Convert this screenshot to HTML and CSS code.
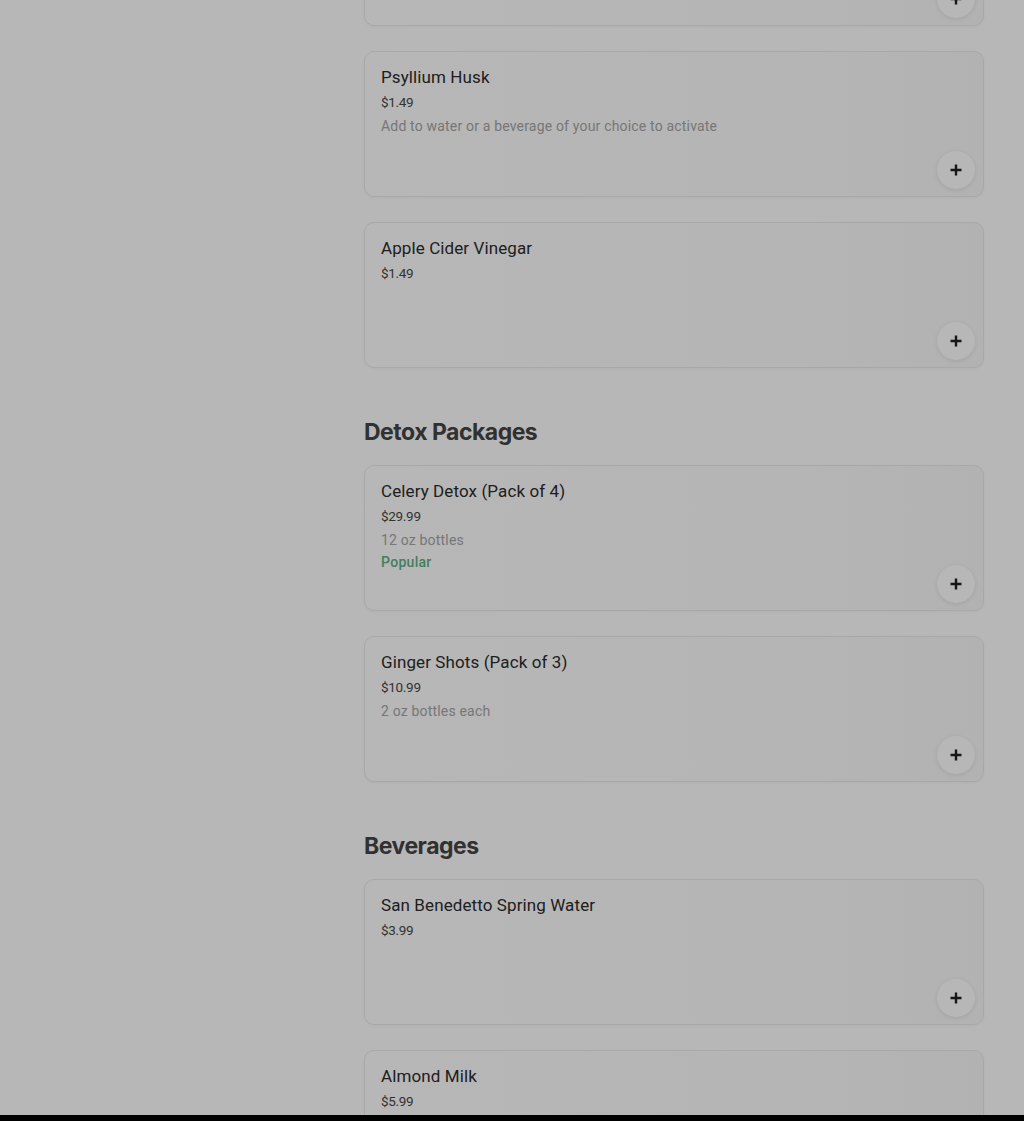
FILE: index.html
```html
<!DOCTYPE html>
<html>
<head>
<meta charset="utf-8">
<link rel="stylesheet" href="styles.css">
</head>
<body>
<div class="layout">
  <main class="menu">
    <div class="card card-partial">
      <button class="add" aria-label="Add"><svg viewBox="0 0 12 12" width="12" height="12"><path d="M6 0.5v11M0.5 6h11" stroke="#1f1f1f" stroke-width="2.4" fill="none"/></svg></button>
    </div>
    <div class="card">
      <div class="name">Psyllium Husk</div>
      <div class="price">$1.49</div>
      <div class="desc">Add to water or a beverage of your choice to activate</div>
      <button class="add" aria-label="Add"><svg viewBox="0 0 12 12" width="12" height="12"><path d="M6 0.5v11M0.5 6h11" stroke="#1f1f1f" stroke-width="2.4" fill="none"/></svg></button>
    </div>
    <div class="card">
      <div class="name">Apple Cider Vinegar</div>
      <div class="price">$1.49</div>
      <button class="add" aria-label="Add"><svg viewBox="0 0 12 12" width="12" height="12"><path d="M6 0.5v11M0.5 6h11" stroke="#1f1f1f" stroke-width="2.4" fill="none"/></svg></button>
    </div>

    <h2 class="section">Detox Packages</h2>
    <div class="card">
      <div class="name">Celery Detox (Pack of 4)</div>
      <div class="price">$29.99</div>
      <div class="desc">12 oz bottles</div>
      <div class="tag">Popular</div>
      <button class="add" aria-label="Add"><svg viewBox="0 0 12 12" width="12" height="12"><path d="M6 0.5v11M0.5 6h11" stroke="#1f1f1f" stroke-width="2.4" fill="none"/></svg></button>
    </div>
    <div class="card">
      <div class="name">Ginger Shots (Pack of 3)</div>
      <div class="price">$10.99</div>
      <div class="desc">2 oz bottles each</div>
      <button class="add" aria-label="Add"><svg viewBox="0 0 12 12" width="12" height="12"><path d="M6 0.5v11M0.5 6h11" stroke="#1f1f1f" stroke-width="2.4" fill="none"/></svg></button>
    </div>

    <h2 class="section">Beverages</h2>
    <div class="card">
      <div class="name">San Benedetto Spring Water</div>
      <div class="price">$3.99</div>
      <button class="add" aria-label="Add"><svg viewBox="0 0 12 12" width="12" height="12"><path d="M6 0.5v11M0.5 6h11" stroke="#1f1f1f" stroke-width="2.4" fill="none"/></svg></button>
    </div>
    <div class="card">
      <div class="name">Almond Milk</div>
      <div class="price">$5.99</div>
    </div>
  </main>
</div>
<div class="overlay"></div>
<div class="bottom-bar"></div>
</body>
</html>
```
FILE: styles.css
```css
html, body {
  margin: 0;
  padding: 0;
  background: #ffffff;
  height: 1121px;
  overflow: hidden;
}
body {
  font-family: Roboto, "Noto Sans", Arial, sans-serif;
  color: #3f3f3f;
}
.layout {
  display: flex;
  padding-left: 364px;
  padding-right: 40px;
}
.menu {
  flex: 1;
  display: flex;
  flex-direction: column;
  gap: 25px;
  margin-top: -120px;
}
.card {
  position: relative;
  box-sizing: border-box;
  height: 146px;
  flex-shrink: 0;
  border: 1px solid #ebebeb;
  border-radius: 10px;
  padding: 15px 16px;
  background: linear-gradient(90deg, #ffffff 0%, #fdfdfd 60%, #f9f9f9 100%);
  box-shadow: 0 1px 3px rgba(0,0,0,0.04);
}
.name {
  font-size: 17px;
  line-height: 20px;
  font-weight: 400;
  color: #2c2c2c;
  letter-spacing: 0.1px;
}
.price {
  margin-top: 5px;
  font-size: 13.5px;
  line-height: 20px;
  color: #484848;
  letter-spacing: -0.3px;
}
.desc {
  margin-top: 4px;
  font-size: 14px;
  line-height: 20px;
  color: #a6a6a6;
  letter-spacing: 0.18px;
}
.tag {
  margin-top: 2px;
  font-size: 14px;
  line-height: 20px;
  font-weight: 500;
  color: #5faf88;
  letter-spacing: 0.3px;
}
.add {
  position: absolute;
  right: 8px;
  bottom: 7px;
  width: 38px;
  height: 38px;
  border-radius: 50%;
  border: none;
  background: #ffffff;
  box-shadow: 0 1px 5px rgba(0,0,0,0.1);
  padding: 0;
  display: flex;
  align-items: center;
  justify-content: center;
}
.section {
  margin: 23px 0 -8px 0;
  height: 32px;
  flex-shrink: 0;
  font-family: Inter, "Noto Sans", sans-serif;
  font-size: 23px;
  line-height: 32px;
  font-weight: 700;
  letter-spacing: -0.5px;
  color: #454545;
}
.overlay {
  position: fixed;
  inset: 0;
  background: rgba(0,0,0,0.282);
}
.bottom-bar {
  position: fixed;
  left: 0;
  right: 0;
  bottom: 0;
  height: 6px;
  background: #000;
}
```
